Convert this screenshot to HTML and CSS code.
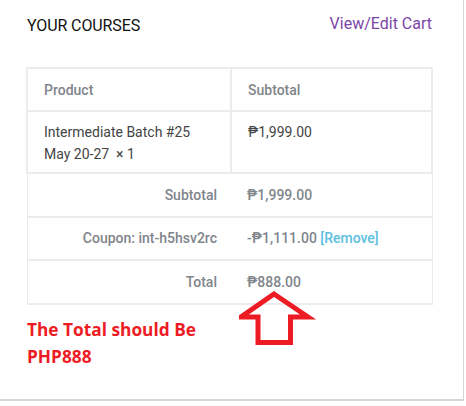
FILE: index.html
```html
<!DOCTYPE html>
<html>
<head>
<meta charset="utf-8">
<link rel="stylesheet" href="styles.css">
</head>
<body>
<div class="panel">
  <div class="head">
    <h3 class="title">YOUR COURSES</h3>
    <a class="edit" href="#">View/Edit Cart</a>
  </div>
  <table class="cart">
    <thead>
      <tr><th class="c1">Product</th><th class="c2">Subtotal</th></tr>
    </thead>
    <tbody>
      <tr class="item"><td class="c1">Intermediate Batch #25<br>May 20-27&nbsp; × 1</td><td class="c2">₱1,999.00</td></tr>
    </tbody>
    <tfoot>
      <tr><th class="lbl">Subtotal</th><td class="val">₱1,999.00</td></tr>
      <tr><th class="lbl">Coupon: int-h5hsv2rc</th><td class="val">-₱1,111.00 <a class="rm" href="#">[Remove]</a></td></tr>
      <tr><th class="lbl">Total</th><td class="val">₱888.00</td></tr>
    </tfoot>
  </table>
  <p class="note">The Total should Be<br>PHP888</p>
  <svg class="arrow" width="80" height="60" viewBox="0 0 80 60">
    <polygon points="35,3 69,26 51.5,26 51.5,51.5 19,51.5 19,26 2,26" fill="none" stroke="#ed1c24" stroke-width="5" stroke-linejoin="miter"/>
  </svg>
</div>
</body>
</html>
```

FILE: styles.css
```css
html, body {
  margin: 0;
  padding: 0;
  background: #fff;
}
body {
  font-family: Roboto, "Liberation Sans", sans-serif;
  width: 466px;
  height: 406px;
  overflow: hidden;
}
.panel {
  position: relative;
  box-sizing: border-box;
  width: 464px;
  height: 401px;
  border-right: 1px solid #d6d6d6;
  border-bottom: 2px solid #d6d6d6;
  padding: 14px 31px 0 26px;
}
.head {
  display: flex;
  justify-content: space-between;
  align-items: flex-start;
  height: 53px;
}
.title {
  margin: 2px 0 0 1px;
  font-size: 16px;
  font-weight: 400;
  color: #111;
  letter-spacing: -0.1px;
}
.edit {
  margin-top: 0;
  font-size: 16px;
  color: #7d45a8;
  text-decoration: none;
}
.cart {
  width: 407px;
  border-collapse: collapse;
  border: 1px solid #ececec;
  font-size: 14px;
}
.cart th, .cart td {
  border: 2px solid #ececec;
  padding: 0 16px;
  text-align: left;
  vertical-align: middle;
}
.cart thead th {
  height: 41px;
  font-weight: 500;
  color: #7f858b;
}
.cart .c1 { width: 170px; }
.item td {
  height: 62px;
  color: #444;
  line-height: 22px;
  vertical-align: top;
  padding-top: 9px;
  padding-bottom: 0;
  box-sizing: border-box;
}
.cart tfoot th, .cart tfoot td {
  height: 41.6px;
  font-weight: 500;
  color: #7f858b;
  border-left: 0;
  border-right: 0;
}
.cart tfoot th.lbl {
  text-align: right;
  padding-right: 14px;
}
.rm {
  color: #5bc0de;
  text-decoration: none;
  font-weight: 500;
}
.note {
  margin: 11px 0 0 1px;
  font-family: "Open Sans", sans-serif;
  font-weight: 700;
  font-size: 17.3px;
  line-height: 27px;
  color: #ed1c24;
}
.arrow {
  position: absolute;
  left: 239px;
  top: 291px;
}
```
